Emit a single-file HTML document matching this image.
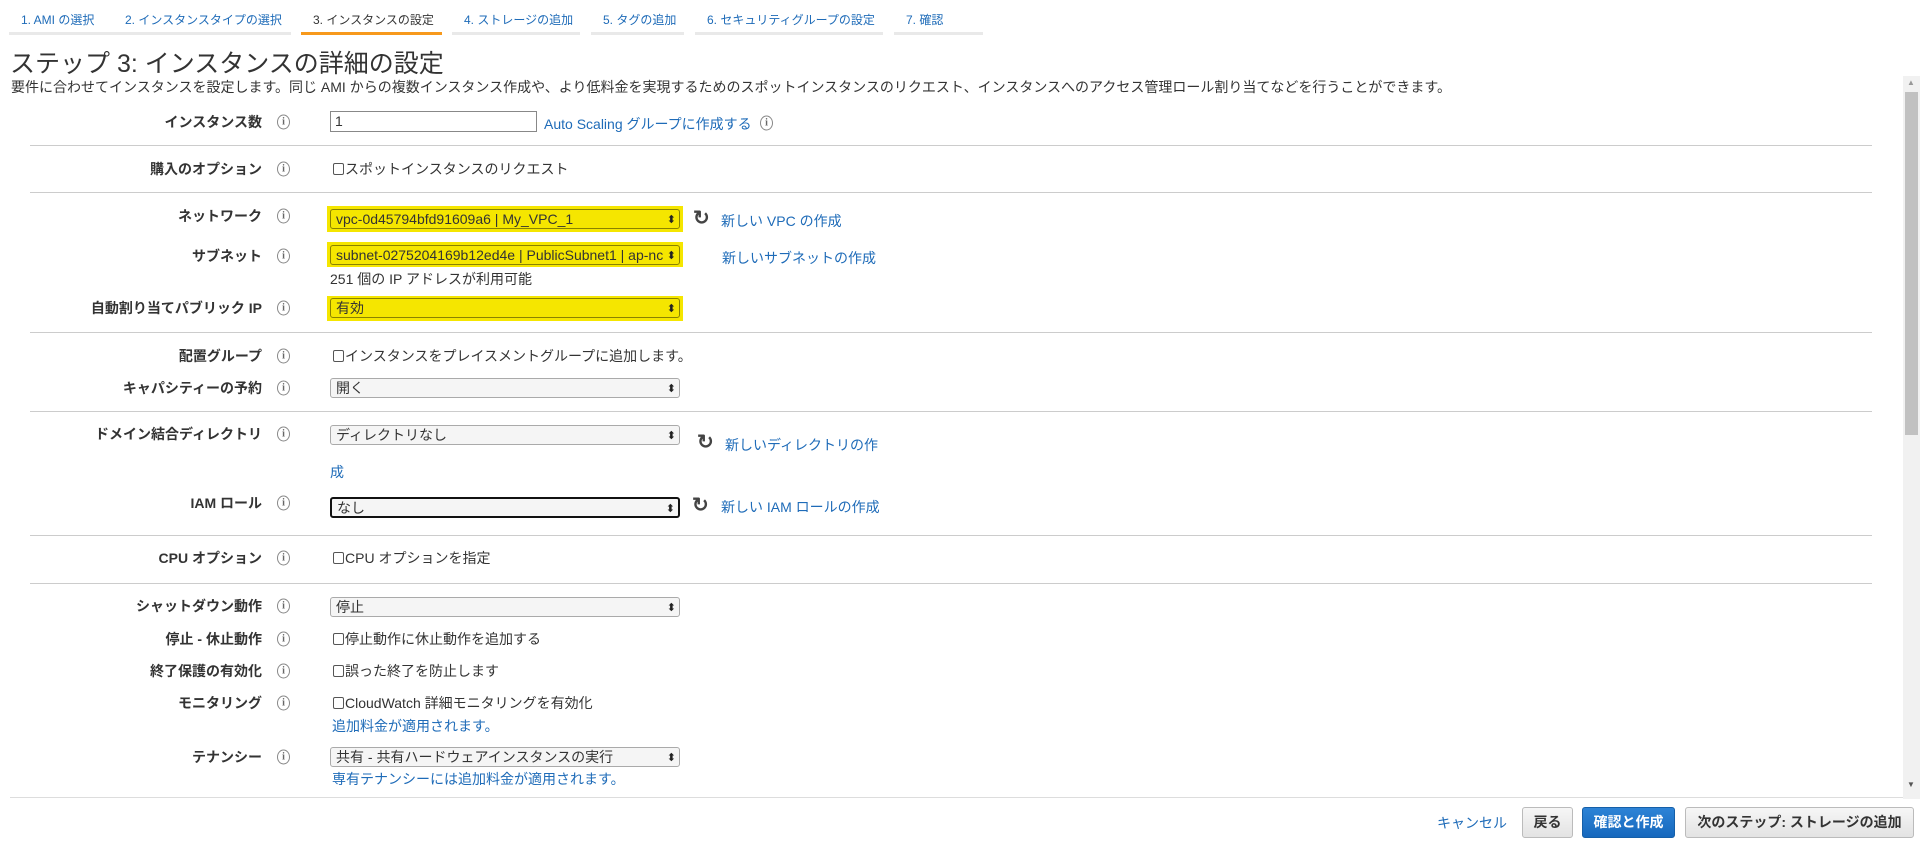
<!DOCTYPE html>
<html><head><meta charset="utf-8"><style>
*{box-sizing:border-box;margin:0;padding:0}
body{width:1920px;height:859px;background:#fff;font-family:"Liberation Sans","Noto Sans CJK JP",sans-serif;font-size:14px;color:#333;position:relative;overflow:hidden}
.a{position:absolute;white-space:nowrap}
.tab{position:absolute;top:9px;height:26px;border-bottom:3px solid #e9e9e9;font-size:12px;color:#1e6bb8;padding:2px 0 0 12px}
.tab.on{border-bottom-color:#f7991c;color:#333}
.sep{position:absolute;left:30px;width:1842px;height:1px;background:#ccc}
.lbl{position:absolute;right:1658px;font-weight:bold;font-size:14px;transform:translateY(-50%);white-space:nowrap}
.ic{position:absolute;left:277px;width:13px;height:15px;border:1px solid #888;border-radius:50%;transform:translateY(-50%);font:bold 10px "Liberation Serif",serif;color:#666;text-align:center;line-height:13px}
.sel{position:absolute;left:330px;width:350px;height:20px;border:1px solid #aaa;border-radius:3px;background:#f5f5f5;font-size:14px;padding:0 5px;line-height:18px}
.sel::after{content:"⬍";position:absolute;right:3px;top:1px;font-size:11px;color:#222}
.y{background:#f5e600;border-color:#8a8200}
.hl{position:absolute;left:327px;width:356px;background:#f5e600}
.cb{position:absolute;left:333px;white-space:nowrap;transform:translateY(-50%)}
.cb i{display:inline-block;width:11px;height:12px;border:1px solid #555;border-radius:2px;vertical-align:-1px;margin-right:1px}
.lk{color:#1e6bb8}
.rf{position:absolute;font-size:20px;font-weight:bold;color:#444;transform:translateY(-50%)}
.btn{position:absolute;top:807px;height:31px;border:1px solid #bbb;border-radius:3px;background:linear-gradient(#f6f6f6,#e3e3e3);font-weight:bold;font-size:14px;text-align:center;line-height:29px;color:#333}
</style></head><body>
<div class="tab" style="left:9px;width:104px">1. AMI の選択</div>
<div class="tab" style="left:113px;width:178px">2. インスタンスタイプの選択</div>
<div class="tab on" style="left:301px;width:141px">3. インスタンスの設定</div>
<div class="tab" style="left:452px;width:128px">4. ストレージの追加</div>
<div class="tab" style="left:591px;width:93px">5. タグの追加</div>
<div class="tab" style="left:695px;width:188px">6. セキュリティグループの設定</div>
<div class="tab" style="left:894px;width:89px">7. 確認</div>

<div class="a" style="left:10px;top:44px;font-size:25px;color:#333">ステップ 3: インスタンスの詳細の設定</div>
<div class="a" style="left:11px;top:77px;font-size:14px">要件に合わせてインスタンスを設定します。同じ AMI からの複数インスタンス作成や、より低料金を実現するためのスポットインスタンスのリクエスト、インスタンスへのアクセス管理ロール割り当てなどを行うことができます。</div>

<div class="a" style="left:1903px;top:76px;width:17px;height:723px;background:#f1f1f1"></div>
<div class="a" style="left:1905px;top:92px;width:13px;height:343px;background:#c1c1c1"></div>
<div class="a" style="left:1907px;top:78px;font-size:8px;color:#999">▲</div>
<div class="a" style="left:1907px;top:780px;font-size:8px;color:#555">▼</div>

<div class="lbl" style="top:122px">インスタンス数</div><div class="ic" style="top:122px">i</div>
<div class="a" style="left:330px;top:111px;width:207px;height:21px;border:1px solid #888;padding:1px 4px">1</div>
<div class="a lk" style="left:544px;top:114px">Auto Scaling グループに作成する</div><div class="ic" style="top:123px;left:760px">i</div>
<div class="sep" style="top:145px"></div>

<div class="lbl" style="top:169px">購入のオプション</div><div class="ic" style="top:169px">i</div>
<div class="cb" style="top:169px"><i></i>スポットインスタンスのリクエスト</div>
<div class="sep" style="top:192px"></div>

<div class="lbl" style="top:216px">ネットワーク</div><div class="ic" style="top:216px">i</div>
<div class="hl" style="top:206px;height:26px"></div>
<div class="sel y" style="top:209px">vpc-0d45794bfd91609a6 | My_VPC_1</div>
<div class="rf" style="left:693px;top:218px">↻</div>
<div class="a lk" style="left:721px;top:211px">新しい VPC の作成</div>

<div class="lbl" style="top:256px">サブネット</div><div class="ic" style="top:256px">i</div>
<div class="hl" style="top:242px;height:25px"></div>
<div class="sel y" style="top:245px;overflow:hidden">subnet-0275204169b12ed4e | PublicSubnet1 | ap-nc</div>
<div class="a lk" style="left:722px;top:248px">新しいサブネットの作成</div>
<div class="a" style="left:330px;top:269px">251 個の IP アドレスが利用可能</div>

<div class="lbl" style="top:308px">自動割り当てパブリック IP</div><div class="ic" style="top:308px">i</div>
<div class="hl" style="top:296px;height:25px"></div>
<div class="sel y" style="top:298px">有効</div>
<div class="sep" style="top:332px"></div>

<div class="lbl" style="top:356px">配置グループ</div><div class="ic" style="top:356px">i</div>
<div class="cb" style="top:356px"><i></i>インスタンスをプレイスメントグループに追加します。</div>
<div class="lbl" style="top:388px">キャパシティーの予約</div><div class="ic" style="top:388px">i</div>
<div class="sel" style="top:378px">開く</div>
<div class="sep" style="top:411px"></div>

<div class="lbl" style="top:434px">ドメイン結合ディレクトリ</div><div class="ic" style="top:434px">i</div>
<div class="sel" style="top:425px">ディレクトリなし</div>
<div class="rf" style="left:697px;top:442px">↻</div>
<div class="a lk" style="left:725px;top:435px">新しいディレクトリの作</div>
<div class="a lk" style="left:330px;top:462px">成</div>
<div class="lbl" style="top:503px">IAM ロール</div><div class="ic" style="top:503px">i</div>
<div class="sel" style="top:497px;height:21px;border:2px solid #111">なし</div>
<div class="rf" style="left:692px;top:505px">↻</div>
<div class="a lk" style="left:721px;top:497px">新しい IAM ロールの作成</div>
<div class="sep" style="top:535px"></div>

<div class="lbl" style="top:558px">CPU オプション</div><div class="ic" style="top:558px">i</div>
<div class="cb" style="top:558px"><i></i>CPU オプションを指定</div>
<div class="sep" style="top:583px"></div>

<div class="lbl" style="top:606px">シャットダウン動作</div><div class="ic" style="top:606px">i</div>
<div class="sel" style="top:597px">停止</div>
<div class="lbl" style="top:639px">停止 - 休止動作</div><div class="ic" style="top:639px">i</div>
<div class="cb" style="top:639px"><i></i>停止動作に休止動作を追加する</div>
<div class="lbl" style="top:671px">終了保護の有効化</div><div class="ic" style="top:671px">i</div>
<div class="cb" style="top:671px"><i></i>誤った終了を防止します</div>
<div class="lbl" style="top:703px">モニタリング</div><div class="ic" style="top:703px">i</div>
<div class="cb" style="top:703px"><i></i>CloudWatch 詳細モニタリングを有効化</div>
<div class="a lk" style="left:332px;top:716px">追加料金が適用されます。</div>
<div class="lbl" style="top:757px">テナンシー</div><div class="ic" style="top:757px">i</div>
<div class="sel" style="top:747px">共有 - 共有ハードウェアインスタンスの実行</div>
<div class="a lk" style="left:332px;top:769px">専有テナンシーには追加料金が適用されます。</div>
<div class="a" style="left:10px;top:797px;width:1893px;height:1px;background:#ddd"></div>

<div class="a lk" style="left:1437px;top:813px;font-size:14px">キャンセル</div>
<div class="btn" style="left:1522px;width:51px">戻る</div>
<div class="btn" style="left:1582px;width:93px;background:linear-gradient(#2d83d6,#1668bd);border-color:#155fa8;color:#fff">確認と作成</div>
<div class="btn" style="left:1685px;width:229px">次のステップ: ストレージの追加</div>
</body></html>
